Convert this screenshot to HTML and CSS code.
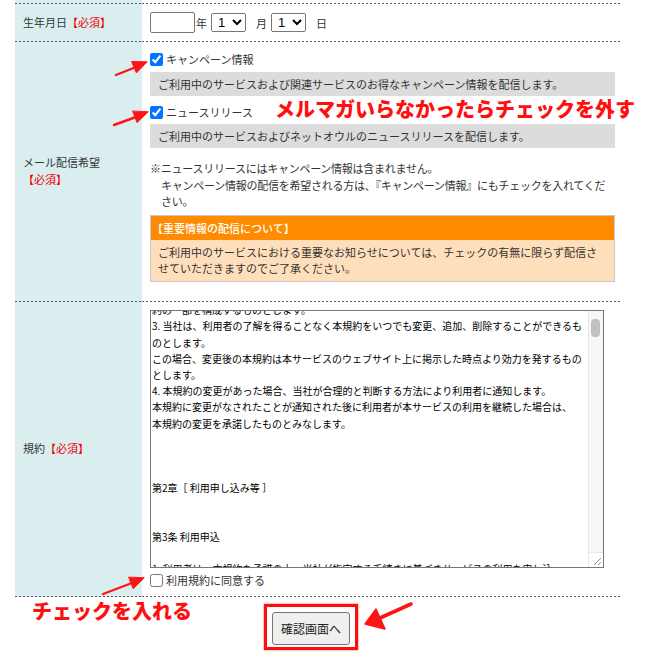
FILE: index.html
```html
<!DOCTYPE html>
<html lang="ja">
<head>
<meta charset="utf-8">
<title>お申し込みフォーム</title>
<link rel="stylesheet" href="styles.css">
</head>
<body>
<div class="page">
  <div class="form">
    <div class="row stub">
      <div class="cell label"></div>
      <div class="cell"></div>
    </div>

    <div class="row">
      <div class="cell label"><span class="label-text">生年月日<span class="req">【必須】</span></span></div>
      <div class="cell field birth">
        <input type="text" class="year">
        <span class="unit u-year">年</span>
        <select class="sel"><option>1</option></select>
        <span class="unit u-mid">月</span>
        <select class="sel"><option>1</option></select>
        <span class="unit u-end">日</span>
      </div>
    </div>

    <div class="row">
      <div class="cell label"><span class="label-text">メール配信希望<br><span class="req">【必須】</span></span></div>
      <div class="cell field mail">
        <label class="check"><input type="checkbox" checked>キャンペーン情報</label>
        <p class="desc">ご利用中のサービスおよび関連サービスのお得なキャンペーン情報を配信します。</p>
        <label class="check check2"><input type="checkbox" checked>ニュースリリース</label>
        <p class="desc desc2">ご利用中のサービスおよびネットオウルのニュースリリースを配信します。</p>
        <p class="note">※ニュースリリースにはキャンペーン情報は含まれません。<br>キャンペーン情報の配信を希望される方は、『キャンペーン情報』にもチェックを入れてくだ<br>さい。</p>
        <div class="notice">
          <div class="notice-head">【重要情報の配信について】</div>
          <div class="notice-body">ご利用中のサービスにおける重要なお知らせについては、チェックの有無に限らず配信さ<br>せていただきますのでご了承ください。</div>
        </div>
      </div>
    </div>

    <div class="row">
      <div class="cell label"><span class="label-text">規約<span class="req">【必須】</span></span></div>
      <div class="cell field terms-cell">
        <div class="terms">
          <div class="terms-view"><div class="terms-text">約の一部を構成するものとします。
3. 当社は、利用者の了解を得ることなく本規約をいつでも変更、追加、削除することができるも
のとします。
この場合、変更後の本規約は本サービスのウェブサイト上に掲示した時点より効力を発するもの
とします。
4. 本規約の変更があった場合、当社が合理的と判断する方法により利用者に通知します。
本規約に変更がなされたことが通知された後に利用者が本サービスの利用を継続した場合は、
本規約の変更を承諾したものとみなします。



第2章［ 利用申し込み等 ］


第3条 利用申込

1. 利用者は、本規約を承諾の上、当社が指定する手続きに基づきサービスの利用を申し込</div></div>
          <div class="scrollbar">
            <div class="thumb"></div>
            <div class="grip">
              <svg width="14" height="14" viewBox="0 0 14 14"><path d="M12 5 L5 12 M12 9 L9 12" stroke="#8a8a8a" stroke-width="1" fill="none"/></svg>
            </div>
          </div>
        </div>
        <label class="check agree"><input type="checkbox">利用規約に同意する</label>
      </div>
    </div>
  </div>

  <div class="actions">
    <div class="highlight"><button type="button" class="btn">確認画面へ</button></div>
  </div>

  <span class="memo memo-top">メルマガいらなかったらチェックを外す</span>
  <span class="memo memo-bottom">チェックを入れる</span>

  <svg class="arrows" width="645" height="652" viewBox="0 0 645 652">
    <g stroke="#ff1414" stroke-width="2.4" stroke-linecap="round" fill="#ff1414">
      <line x1="116" y1="75" x2="136" y2="67"/>
      <polygon points="147,62 136.4,72.9 131.8,61.9" stroke-width="1"/>
      <line x1="114" y1="125" x2="136" y2="117"/>
      <polygon points="148,112 137,122.6 132.8,111.4" stroke-width="1"/>
      <line x1="103" y1="594" x2="132" y2="583"/>
      <polygon points="144,578 133.2,588.7 128.8,577.5" stroke-width="1"/>
      <line x1="411" y1="604" x2="380" y2="618" stroke-width="3.6"/>
      <polygon points="365,624 376,609 385,629" stroke-width="1.5" stroke-linejoin="round"/>
    </g>
  </svg>
</div>
</body>
</html>
```

FILE: styles.css
```css
html, body {
  margin: 0;
  padding: 0;
  background: #ffffff;
  overflow: hidden;
}

body {
  font-family: "Noto Sans CJK JP", "Noto Sans", sans-serif;
  font-size: 11px;
  color: #333333;
}

.page {
  position: relative;
  width: 645px;
  height: 652px;
}

.form {
  margin-left: 15px;
  width: 607px;
}

.row {
  display: grid;
  grid-template-columns: 127px 1fr;
}

.cell {
  box-sizing: border-box;
  background-image: repeating-linear-gradient(90deg, #5a5a5a 0 2px, transparent 2px 4px);
  background-repeat: no-repeat;
  background-size: 100% 1px;
  background-position: left bottom;
  padding-bottom: 1px;
}

.stub .cell {
  height: 4px;
}

.label {
  background-color: #daeef0;
  display: flex;
  align-items: center;
  padding-left: 8px;
  line-height: 17px;
}

.label-text {
  display: block;
}

.req {
  color: #ee0000;
}

.field {
  padding-left: 8px;
  padding-right: 7px;
}

/* birthday row */
.birth {
  height: 38px;
  display: flex;
  align-items: center;
}

.year {
  box-sizing: border-box;
  width: 45px;
  height: 21px;
  margin: 0 1px 0 0;
  padding: 0 2px;
  border: 1px solid #767676;
  border-radius: 2px;
  font-size: 12px;
}

.unit {
  line-height: 14px;
}

.u-year { margin-right: 4px; }
.u-mid { margin: 0 4px 0 10px; }
.u-end { margin-left: 10px; }

.sel {
  box-sizing: border-box;
  width: 35px;
  height: 19px;
  margin: 0;
  font-family: "Liberation Sans", Arial, sans-serif;
  font-size: 13px;
  padding: 0 0 0 2px;
}

/* mail row */
.mail {
  padding-top: 11px;
  padding-bottom: 20px;
}

.check {
  display: flex;
  align-items: center;
  height: 13px;
  line-height: 13px;
}

.check input {
  width: 13px;
  height: 13px;
  margin: 0 3px 0 0;
}

.desc {
  margin: 6px 0 0;
  height: 24px;
  line-height: 24px;
  padding-left: 8px;
  background: #dcdcdc;
}

.check2 {
  margin-top: 10px;
}

.desc2 {
  margin-top: 5px;
}

.note {
  margin: 12px 0 5px;
  line-height: 16.5px;
  padding-left: 11px;
  text-indent: -11px;
  white-space: nowrap;
  letter-spacing: -0.25px;
}

.notice {
  border: 1px solid #c8c8c8;
}

.notice-head {
  height: 24px;
  line-height: 24px;
  padding-left: 1px;
  background: #ff8c00;
  color: #ffffff;
  font-weight: 500;
}

.notice-body {
  background: #ffdfbb;
  padding: 4px 7px 5px;
  line-height: 16px;
}

/* terms row */
.terms-cell {
  padding-top: 8px;
  padding-bottom: 10px;
}

.terms {
  box-sizing: border-box;
  width: 454px;
  height: 258px;
  border: 1px solid #767676;
  display: flex;
  background: #ffffff;
}

.terms-view {
  flex: 1;
  overflow: hidden;
  padding-left: 1px;
}

.terms-text {
  margin-top: -8.3px;
  font-size: 10px;
  line-height: 16.2px;
  color: #000000;
  white-space: pre;
}

.scrollbar {
  width: 15px;
  box-sizing: border-box;
  border-left: 1px solid #e8e8e8;
  background: #f8f8f8;
  display: flex;
  flex-direction: column;
}

.thumb {
  width: 9px;
  height: 18px;
  margin: 8px 0 0 2px;
  border-radius: 4px;
  background: #c1c1c1;
}

.grip {
  margin-top: auto;
  height: 15px;
  box-sizing: border-box;
  border-top: 1px solid #e8e8e8;
  background: #ffffff;
  display: flex;
  align-items: flex-end;
  justify-content: flex-end;
}

.grip svg {
  display: block;
}

.agree {
  margin-top: 6px;
}

/* actions */
.actions {
  display: flex;
  justify-content: center;
  width: 607px;
  margin-left: 15px;
  padding-right: 15px;
  box-sizing: border-box;
  padding-top: 7px;
}

.highlight {
  border: 3px solid #ff0d0d;
  padding: 5px 5px 2px;
  box-shadow: 0 0 1.5px #ff3030;
  width: 78px;
}

.btn {
  box-sizing: border-box;
  width: 78px;
  height: 33px;
  margin: 0;
  padding: 0;
  background: #efefef;
  border: 1px solid #767676;
  border-radius: 3px;
  font-family: "Noto Sans CJK JP", sans-serif;
  font-size: 12px;
  color: #222222;
  display: block;
}

/* annotations */
.memo {
  position: absolute;
  color: #ff0f0f;
  font-weight: 900;
  font-size: 20px;
  line-height: 20px;
  white-space: nowrap;
}

.memo-top {
  left: 275px;
  top: 99px;
}

.memo-bottom {
  left: 32px;
  top: 601px;
}

.arrows {
  position: absolute;
  left: 0;
  top: 0;
  pointer-events: none;
}
```
